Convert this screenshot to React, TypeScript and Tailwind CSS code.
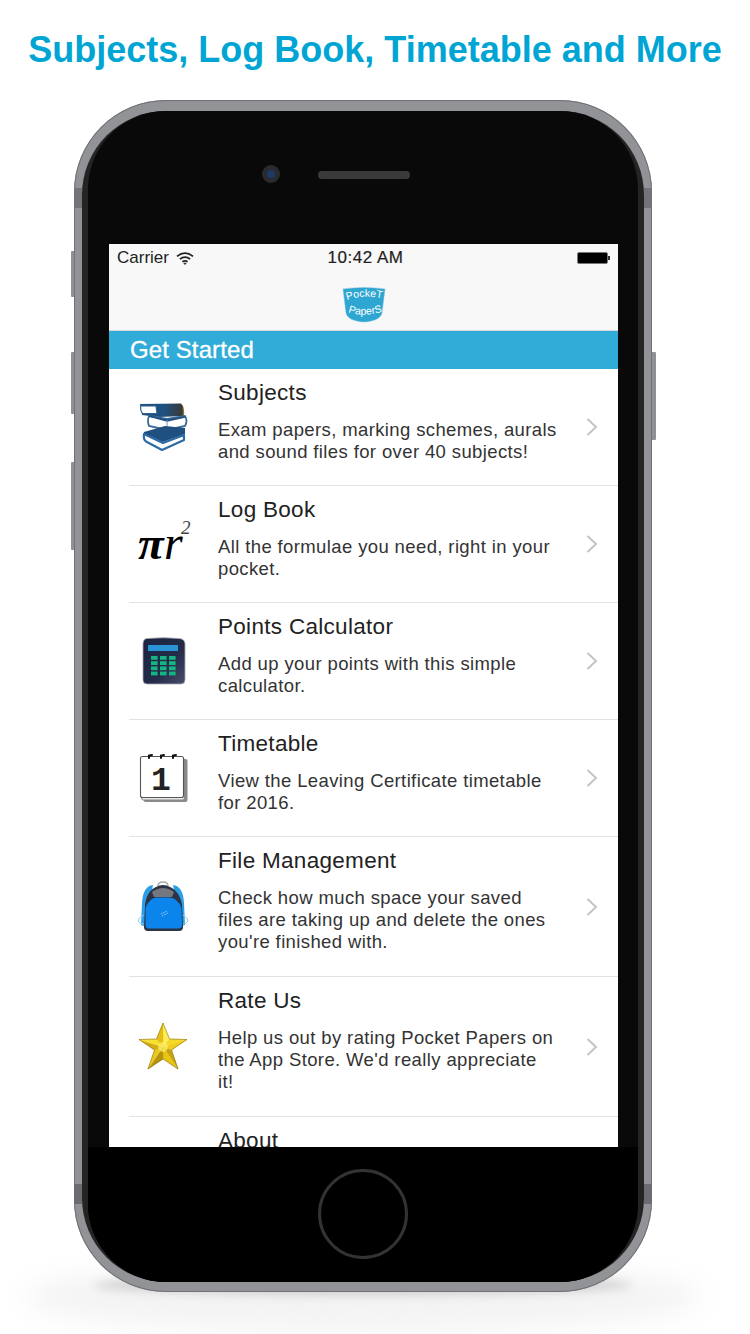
const SANS = "font-['Liberation_Sans',Arial,sans-serif]";

function Books() {
  return (
    <svg width="52" height="52" viewBox="0 0 52 52">
      <defs>
        <linearGradient id="bk" x1="0" y1="0" x2="1" y2="0">
          <stop offset="0.55" stopColor="#1f5080" />
          <stop offset="0.95" stopColor="#3a3a38" />
          <stop offset="1" stopColor="#a88a30" />
        </linearGradient>
      </defs>
      <path d="M3 3 L44 2.5 Q48 6 47 15 L22 16 L5 14 Z" fill="url(#bk)" />
      <path d="M3.5 5 L19 5 L20 12.5 L5.5 12.5 Q3 9 3.5 5 Z" fill="#fff" stroke="#2d6090" strokeWidth="1.2" />
      <path d="M12 15 L30 18 L48 15 Q51 20 48 25 L30 29 L12 25 Q10 20 12 15 Z" fill="#fff" stroke="#3a6a96" strokeWidth="1.8" />
      <path d="M12 15 L30 19 L48 16 L30 20 Z" fill="#1f5080" stroke="#1f5080" strokeWidth="1.4" />
      <path d="M30 19 L30 29" stroke="#7a97b3" strokeWidth="1" />
      <path d="M7 31 L28 25 L48 27 L48 33 L26 41 L7 33 Z" fill="#1f5080" />
      <path d="M7 33 Q6 38 9 40.5 L25 49 L47 39 L47 34 L26 42 Z" fill="#fff" stroke="#2d6ba5" strokeWidth="2.2" strokeLinejoin="round" />
    </svg>
  );
}

function PiR() {
  return (
    <span className="flex items-baseline font-['Liberation_Serif','Times_New_Roman',serif] italic text-black leading-none w-[52px] h-[48px] -mt-[2px] pl-[1px]">
      <span className="text-[47px] font-bold leading-[48px] w-[26px] shrink-0">π</span>
      <span className="text-[48px] leading-[48px] w-[17px] shrink-0">r</span>
      <span className="text-[19px] text-[#444] relative top-[-25px] leading-none">2</span>
    </span>
  );
}

function Calc() {
  return (
    <svg width="46" height="50" viewBox="0 0 46 50">
      <defs>
        <linearGradient id="cb" x1="0" y1="0" x2="1" y2="1">
          <stop offset="0" stopColor="#1a2340" />
          <stop offset="0.6" stopColor="#242c4a" />
          <stop offset="1" stopColor="#4a4f6a" />
        </linearGradient>
      </defs>
      <path d="M7 2.5 Q24 1 39 2.5 Q45 3 45 8 L45 44 Q45 48 41 48 L7 48 Q3 48 3 44 L3 8 Q3 3 7 2.5 Z" fill="url(#cb)" stroke="#a6a9b3" strokeWidth="0.8" />
      <rect x="8" y="9" width="30" height="6" fill="#2a93d6" />
      {[0, 1, 2, 3].map((r) =>
        [0, 1, 2].map((c) => (
          <rect key={`${r}${c}`} x={11 + c * 9} y={20 + r * 5.2} width="6.6" height="3.8" fill="#14b583" />
        )),
      )}
    </svg>
  );
}

function Cal() {
  return (
    <svg width="52" height="50" viewBox="0 0 52 50">
      <rect x="6.5" y="6" width="44" height="43" rx="2" fill="#8a8a8a" />
      <rect x="4.5" y="5" width="43" height="42" rx="2" fill="#e8e8e8" stroke="#888" />
      <rect x="3.5" y="3.5" width="43" height="41" rx="2" fill="#fff" stroke="#555" strokeWidth="1.1" />
      {[12, 24, 36].map((x) => (
        <path key={x} d={`M${x} 5 L${x} 2.5 L${x + 3} 2`} stroke="#111" strokeWidth="2" fill="none" strokeLinecap="round" />
      ))}
      <text x="24" y="37" textAnchor="middle" fontFamily="'Liberation Mono',monospace" fontWeight="700" fontSize="33" fill="#222">1</text>
    </svg>
  );
}

function Pack() {
  return (
    <svg width="52" height="52" viewBox="0 0 52 52">
      <path d="M26 1 Q21 1 21 5 L31 5 Q31 1 26 1 Z" fill="none" stroke="#aaa" strokeWidth="1.5" />
      <path d="M16 4 Q6 5 5 22 L4 44 L10 46 L14 14 Z M36 4 Q46 5 47 22 L48 44 L42 46 L38 14 Z" fill="#2b9ee8" />
      <path d="M8 24 Q10 6 26 4 Q42 6 45 24 L46 46 Q46 50 42 50 L11 50 Q7 50 7 46 Z" fill="#2b3345" />
      <path d="M15 11 Q26 3 37 11 L35 16 L17 16 Z" fill="#74777e" />
      <path d="M8.5 27 Q12 17 20 16.5 L32 16.5 Q41 17 44.5 27 L45 44 Q45 47.5 41 47.5 L12 47.5 Q8.5 47.5 8.5 44 Z" fill="#0b84ec" />
      <path d="M24 33 L30 30 M25 35 L31 32" stroke="#cfe9ff" strokeWidth="0.9" strokeDasharray="1 1" />
      <path d="M7 34 Q1 37 1 40 Q3 43 7 43 M46 34 Q51 37 51 40 Q49 43 46 43" fill="none" stroke="#8cc8ef" strokeWidth="1" />
    </svg>
  );
}

function Star() {
  const pts: [number, number][] = [
    [25, 1], [31.5, 17], [49, 17.5], [33.5, 28], [40, 47], [25, 37], [10, 47], [16.5, 28], [1, 17.5], [18.5, 17],
  ];
  const fills = ["#fdec52", "#f6d826", "#f0cc1c", "#c9a30e", "#e8c416", "#b8930e", "#ecc818", "#d4ac10", "#f8e030", "#e4be14"];
  return (
    <svg width="50" height="50" viewBox="0 0 50 50">
      {pts.map((p, i) => {
        const q = pts[(i + 1) % pts.length];
        return <polygon key={i} points={`25,25 ${p[0]},${p[1]} ${q[0]},${q[1]}`} fill={fills[i]} stroke={fills[i]} strokeWidth="0.3" />;
      })}
      <polygon points="25,1 31.5,17 49,17.5 33.5,28 40,47 25,37 10,47 16.5,28 1,17.5 18.5,17" fill="none" stroke="#6e5c10" strokeWidth="0.5" />
      <circle cx="25" cy="25" r="5" fill="#fdef6a" opacity="0.7" />
    </svg>
  );
}

function Logo() {
  return (
    <svg width="46" height="38" viewBox="0 0 46 38">
      <path d="M2 4 Q23 1 44 4 L41 28 Q39 36 23 37 Q7 36 5 28 Z" fill="#2ea6d2" stroke="#7fc4de" strokeWidth="0.8" strokeDasharray="1.5 1" />
      <path id="lg1" d="M6 15 Q23 9 44 14" fill="none" />
      <path id="lg2" d="M7 27 Q22 33 44 26" fill="none" />
      <text fontFamily="'Liberation Sans',sans-serif" fontSize="10.5" fill="#fff">
        <textPath href="#lg1">PockeT</textPath>
      </text>
      <text fontFamily="'Liberation Sans',sans-serif" fontSize="10.5" fill="#fff">
        <textPath href="#lg2">PaperS</textPath>
      </text>
    </svg>
  );
}

function Wifi() {
  return (
    <svg width="18" height="13" viewBox="0 0 18 13" fill="none" stroke="#222" strokeWidth="1.7">
      <path d="M1 4.4 Q9 -2 17 4.4" />
      <path d="M3.8 7.2 Q9 3 14.2 7.2" />
      <path d="M6.4 9.8 Q9 8 11.6 9.8" />
      <path d="M9 12.6 L7.8 11.3 Q9 10.6 10.2 11.3 Z" fill="#222" strokeWidth="0.6" />
    </svg>
  );
}

function Chevron() {
  return (
    <svg width="12" height="20" viewBox="0 0 12 20" fill="none" stroke="#c4c4c8" strokeWidth="2">
      <path d="M1.5 2 L10 10 L1.5 18" />
    </svg>
  );
}

const rows = [
  { title: "Subjects", desc: ["Exam papers, marking schemes, aurals", "and sound files for over 40 subjects!"], h: "h-[117px]", icon: <Books /> },
  { title: "Log Book", desc: ["All the formulae you need, right in your", "pocket."], h: "h-[117px]", icon: <PiR /> },
  { title: "Points Calculator", desc: ["Add up your points with this simple", "calculator."], h: "h-[117px]", icon: <Calc /> },
  { title: "Timetable", desc: ["View the Leaving Certificate timetable", "for 2016."], h: "h-[117px]", icon: <Cal /> },
  { title: "File Management", desc: ["Check how much space your saved", "files are taking up and delete the ones", "you're finished with."], h: "h-[140px]", icon: <Pack /> },
  { title: "Rate Us", desc: ["Help us out by rating Pocket Papers on", "the App Store. We'd really appreciate", "it!"], h: "h-[140px]", icon: <Star /> },
];

function Row({ r }: { r: (typeof rows)[number] }) {
  return (
    <div className={`${r.h} shrink-0 ml-[20px] flex items-center border-b border-[#e2e2e2]`}>
      <div className="w-[68px] flex justify-center shrink-0 mr-[21px]">{r.icon}</div>
      <div className="flex-1 self-start pt-[11px]">
        <div className="text-[22.5px] leading-[26px] tracking-[0.3px] text-[#222]">{r.title}</div>
        <div className="mt-[13px] text-[18.5px] leading-[22px] tracking-[0.38px] text-[#333]">
          {r.desc.map((d) => (
            <div key={d} className="whitespace-nowrap">{d}</div>
          ))}
        </div>
      </div>
      <div className="w-[32px] shrink-0">
        <Chevron />
      </div>
    </div>
  );
}

export default function App() {
  return (
    <div className={`${SANS} w-[750px] h-[1334px] bg-white overflow-hidden relative`}>
      <div className="h-[100px] flex justify-center pt-[26px]">
        <h1 className="text-[36px] leading-[48px] font-bold text-[#00a5d4] whitespace-nowrap h-[48px]">
          Subjects, Log Book, Timetable and More
        </h1>
      </div>

      <div className="relative ml-[74px] w-[578px] h-[1192px]">
        {/* ground shadow */}
        <div className="absolute left-[-50px] right-[-50px] bottom-[-40px] h-[70px] rounded-[50%] bg-[#f3f3f3] blur-[14px]" />
        <div className="absolute left-[20px] right-[20px] bottom-[-3px] h-[20px] rounded-[50%] bg-[#cfcfcf] blur-[5px]" />

        {/* side buttons */}
        <div className="absolute left-[-3px] top-[151px] w-[3px] h-[46px] bg-[#8f9194] rounded-l-[1px]" />
        <div className="absolute left-[-3px] top-[252px] w-[3px] h-[62px] bg-[#8f9194] rounded-l-[1px]" />
        <div className="absolute left-[-3px] top-[362px] w-[3px] h-[88px] bg-[#8f9194] rounded-l-[1px]" />
        <div className="absolute right-[-4px] top-[252px] w-[4px] h-[88px] bg-[#8f9194] rounded-r-[1px]" />

        {/* case */}
        <div className="relative h-full rounded-[92px] bg-[#929397] px-[8px] pt-[11px] pb-[10px] shadow-[inset_0_0_0_1px_#707174]">
          {/* antenna bands */}
          <div className="absolute left-0 top-[88px] w-[8px] h-[20px] bg-[#737477]" />
          <div className="absolute right-0 top-[88px] w-[8px] h-[20px] bg-[#737477]" />
          <div className="absolute left-0 bottom-[88px] w-[8px] h-[20px] bg-[#6b6c6f]" />
          <div className="absolute right-0 bottom-[88px] w-[8px] h-[20px] bg-[#6b6c6f]" />

          <div className="h-full rounded-[84px] bg-[#242424] px-[6px]">
            <div className="h-full rounded-[78px] bg-[#090909] flex flex-col px-[21px]">
              {/* top bezel */}
              <div className="h-[133px] shrink-0 flex items-start pt-[54px]">
                <div className="ml-[153px] w-[18px] h-[18px] rounded-full bg-[#2a2b30] flex items-center justify-center">
                  <div className="w-[8px] h-[8px] rounded-full bg-[#1d3a63]" />
                </div>
                <div className="ml-[38px] mt-[6px] w-[92px] h-[8px] rounded-full bg-[#3a3a3b]" />
              </div>

              {/* screen */}
              <div className="h-[903px] w-[509px] shrink-0 bg-white overflow-hidden flex flex-col">
                <div className="h-[87px] shrink-0 bg-[#f8f8f8] flex flex-col border-b border-[#d8d8d8]">
                  <div className="h-[28px] shrink-0 flex items-center justify-between px-[8px] text-[17px] text-[#222]">
                    <div className="flex items-center gap-[7px] w-[124px]">
                      <span>Carrier</span>
                      <Wifi />
                    </div>
                    <span className="tracking-[0.5px] [-webkit-text-stroke:0.2px_#222]">10:42 AM</span>
                    <div className="w-[120px] flex justify-end">
                      <div className="flex items-center">
                        <div className="w-[31px] h-[12px] rounded-[2px] bg-black border border-[#777]" />
                        <div className="w-[2px] h-[4px] bg-[#333]" />
                      </div>
                    </div>
                  </div>
                  <div className="flex-1 flex justify-center items-start pt-[13px]">
                    <Logo />
                  </div>
                </div>
                <div className="h-[38px] shrink-0 bg-[#31acd8] flex items-center px-[21px] text-[24px] tracking-[0.1px] text-white [-webkit-text-stroke:0.3px_white]">
                  Get Started
                </div>
                {rows.map((r) => (
                  <Row key={r.title} r={r} />
                ))}
                <div className="ml-[109px] pt-[11px] text-[22.5px] leading-[26px] tracking-[0.3px] text-[#222]">About</div>
              </div>

              {/* bottom bezel */}
              <div className="flex-1 flex items-start justify-center pt-[22px] bg-black -mx-[21px] rounded-b-[78px]">
                <div className="w-[90px] h-[90px] rounded-full border-[3px] border-[#333336]" />
              </div>
            </div>
          </div>
        </div>
      </div>
    </div>
  );
}
